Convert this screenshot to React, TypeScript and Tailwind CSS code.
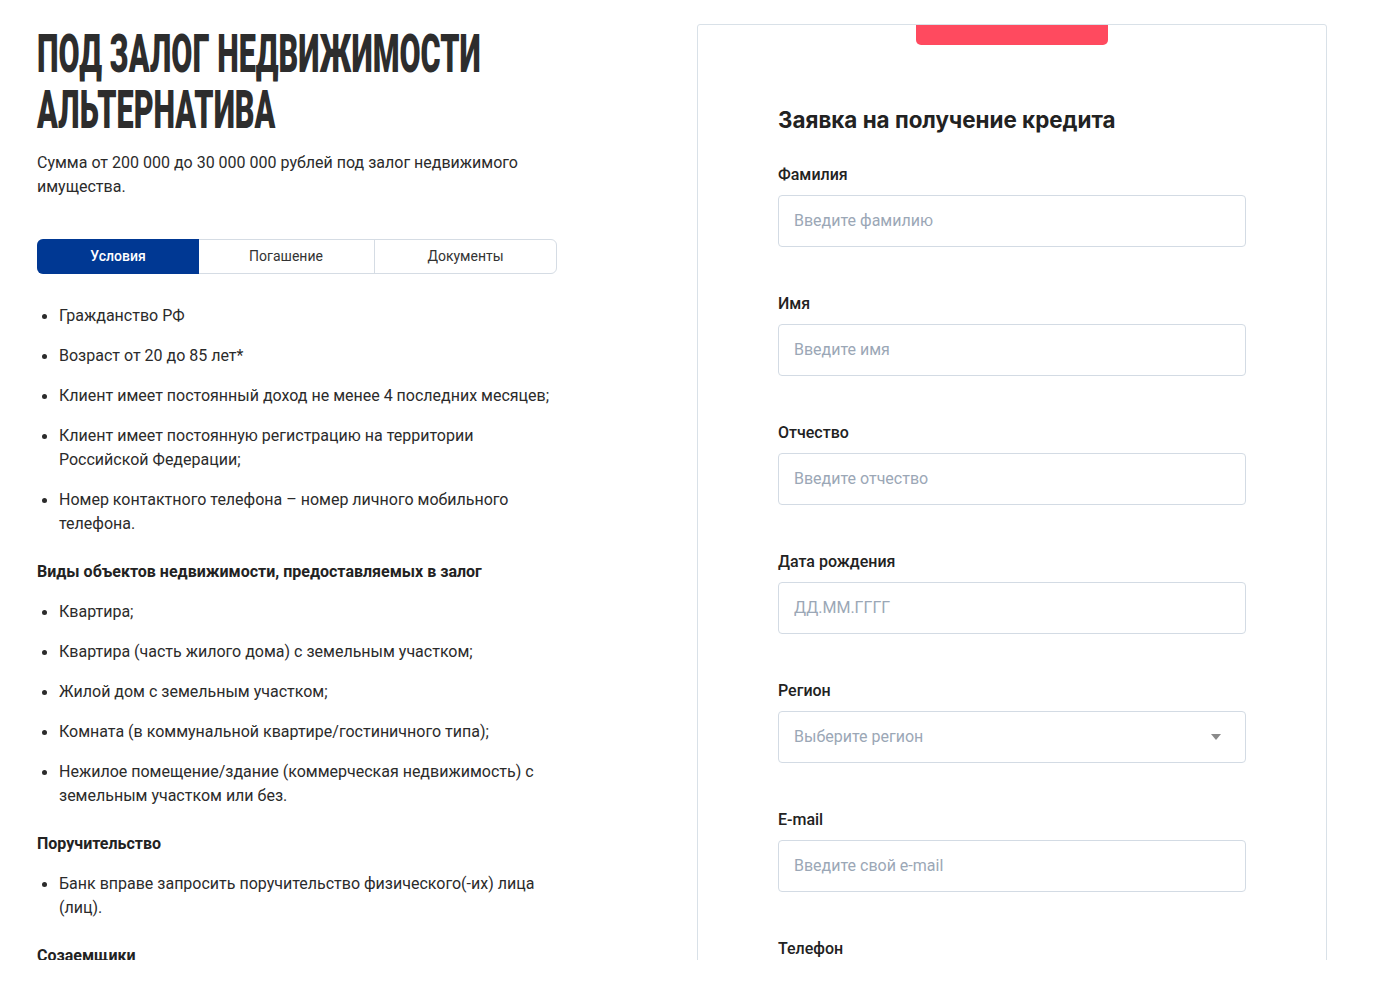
const TERMS = [
  'Гражданство РФ',
  'Возраст от 20 до 85 лет*',
  'Клиент имеет постоянный доход не менее 4 последних месяцев;',
  'Клиент имеет постоянную регистрацию на территории Российской Федерации;',
  'Номер контактного телефона – номер личного мобильного телефона.',
]

const OBJECTS = [
  'Квартира;',
  'Квартира (часть жилого дома) с земельным участком;',
  'Жилой дом с земельным участком;',
  'Комната (в коммунальной квартире/гостиничного типа);',
  'Нежилое помещение/здание (коммерческая недвижимость) с земельным участком или без.',
]

const FIELDS = [
  { label: 'Фамилия', placeholder: 'Введите фамилию' },
  { label: 'Имя', placeholder: 'Введите имя' },
  { label: 'Отчество', placeholder: 'Введите отчество' },
  { label: 'Дата рождения', placeholder: 'ДД.ММ.ГГГГ' },
  { label: 'Регион', placeholder: 'Выберите регион', select: true },
  { label: 'E-mail', placeholder: 'Введите свой e-mail' },
  { label: 'Телефон', placeholder: '+7 (___) ___-__-__' },
]

function Bullets({ items }: { items: string[] }) {
  return (
    <ul className="flex flex-col gap-4">
      {items.map((t) => (
        <li key={t} className="flex">
          <span className="flex h-6 w-[22px] shrink-0 items-center pl-[5px]">
            <span className="h-[5px] w-[5px] rounded-full bg-[#2b2b2b]" />
          </span>
          <span className="text-[16px] leading-6">{t}</span>
        </li>
      ))}
    </ul>
  )
}

function Field({ label, placeholder, select }: { label: string; placeholder: string; select?: boolean }) {
  return (
    <div className="mb-[45px]">
      <div className="mb-[8px] text-[16px] font-medium leading-6 text-[#222]">{label}</div>
      <div className="flex h-[52px] items-center justify-between rounded-[4px] border border-[#d3dbe4] pl-[15px] pr-4">
        <span className="text-[16px] text-[#9ba7b6]">{placeholder}</span>
        {select && (
          <svg width="10" height="6" viewBox="0 0 10 6" className="mr-[8px]">
            <path d="M0 0h10L5 6z" fill="#8a8a8a" />
          </svg>
        )}
      </div>
    </div>
  )
}

export default function App() {
  return (
    <div className="h-[960px] overflow-hidden bg-white font-['Roboto',sans-serif] text-[#2b2b2b]">
      <div className="flex pl-[37px]">
        {/* left: product description */}
        <div className="w-[520px] shrink-0 pt-[26px]">
          <h1 className="text-[53px] font-black uppercase leading-[56px] text-[#2d2d2d]">
            <span className="inline-block origin-left scale-x-[0.577] whitespace-nowrap">Под залог недвижимости</span>
            <br />
            <span className="inline-block origin-left scale-x-[0.577] whitespace-nowrap">Альтернатива</span>
          </h1>
          <p className="mt-[13px] text-[16px] leading-6">
            Сумма от 200 000 до 30 000 000 рублей под залог недвижимого имущества.
          </p>

          <div className="mt-[40px] flex h-[35px] rounded-[6px] border border-[#d5dce4] text-[14px]">
            <button className="-m-px w-[162px] rounded-l-[6px] bg-[#003893] font-medium text-white">Условия</button>
            <button className="w-[177px] border-r border-[#d5dce4] text-[#333]">Погашение</button>
            <button className="flex-1 text-[#333]">Документы</button>
          </div>

          <div className="mt-[30px]">
            <Bullets items={TERMS} />
            <h3 className="mb-4 mt-6 text-[16px] font-bold leading-6 text-[#222]">
              Виды объектов недвижимости, предоставляемых в залог
            </h3>
            <Bullets items={OBJECTS} />
            <h3 className="mb-4 mt-6 text-[16px] font-bold leading-6 text-[#222]">Поручительство</h3>
            <Bullets items={['Банк вправе запросить поручительство физического(-их) лица (лиц).']} />
            <h3 className="mb-4 mt-6 text-[16px] font-bold leading-6 text-[#222]">Созаемщики</h3>
            <Bullets items={['Созаемщиками могут выступать собственники предмета залога.']} />
          </div>
        </div>

        {/* right: application form */}
        <div className="ml-[140px] mt-[24px] w-[630px] shrink-0 rounded-[3px] border border-[#d9e1e8] px-[80px]">
          <div className="flex justify-center">
            <div className="h-[20px] w-[192px] rounded-b-[5px] bg-[#ff4a5f]" />
          </div>
          <h2 className="mb-[29px] mt-[61px] font-['Inter',sans-serif] text-[22.4px] font-bold leading-7 text-[#222]">
            Заявка на получение кредита
          </h2>
          {FIELDS.map((f) => (
            <Field key={f.label} {...f} />
          ))}
        </div>
      </div>
    </div>
  )
}
